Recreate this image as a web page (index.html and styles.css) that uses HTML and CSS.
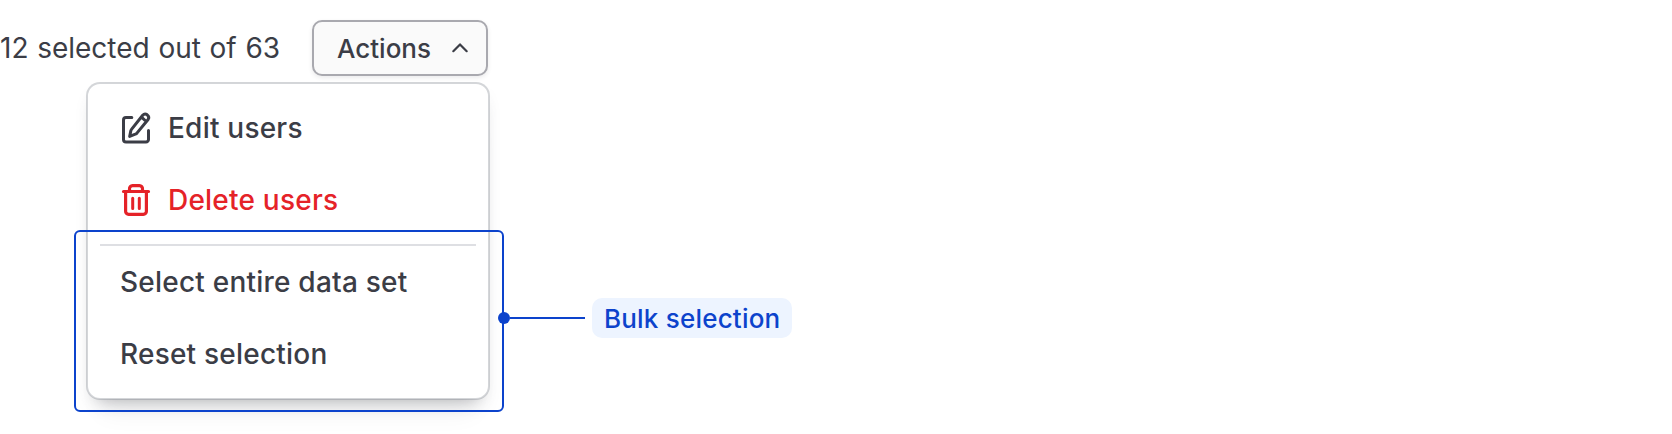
FILE: index.html
```html
<!DOCTYPE html>
<html lang="en">
<head>
<meta charset="utf-8">
<title>Bulk actions</title>
<link rel="stylesheet" href="styles.css">
</head>
<body>
<main class="page">
  <header class="toolbar">
    <span class="count">12 selected out of 63</span>
    <button class="actions" type="button"><span class="actions-label">Actions</span>
      <svg class="chevron" width="18" height="12" viewBox="0 0 18 12" fill="none" stroke="currentColor" stroke-width="2.2" stroke-linecap="round" stroke-linejoin="round"><path d="M2.3 9.2 9 2.400l6.700 6.800"/></svg>
    </button>
  </header>
  <div class="menu" role="menu">
    <div class="item" role="menuitem">
      <svg class="icon" width="32" height="36" viewBox="0 0 32 36" fill="none" stroke="currentColor" stroke-width="3" stroke-linecap="round" stroke-linejoin="round"><path d="M11.800 7.500H6A2.500 2.500 0 0 0 3.500 10V29.500A2.500 2.500 0 0 0 6 32H26A2.500 2.500 0 0 0 28.500 29.500V20.500"/><path d="M9.700 26.400 10.800 20.900Q11 20 11.700 19.100L22.700 5.200Q24.700 3 27.200 4.800 29.800 6.900 28.100 9.500L17.100 22.900Q16.400 23.700 15.300 24.200ZM21.500 7.200 26.200 11.500"/></svg>
      <span class="item-label">Edit users</span>
    </div>
    <div class="item danger" role="menuitem">
      <svg class="icon" width="32" height="36" viewBox="0 0 32 36" fill="none" stroke="currentColor" stroke-width="3.200" stroke-linecap="round" stroke-linejoin="round"><path d="M3.500 9.500H28.500M9.500 9V7A3 3 0 0 1 12.500 3.700H19.500A3 3 0 0 1 22.500 7V9M5.600 10V29.200A3 3 0 0 0 8.600 32.300H23.400A3 3 0 0 0 26.400 29.200V10"/><path stroke-width="3" d="M12.700 16.200V26.500M19.300 16.200V26.500"/></svg>
      <span class="item-label">Delete users</span>
    </div>
    <div class="divider"></div>
    <div class="bulk">
      <div class="item" role="menuitem"><span class="item-label">Select entire data set</span></div>
      <div class="item" role="menuitem"><span class="item-label">Reset selection</span></div>
      <div class="highlight"></div>
      <div class="callout"><span class="dot"></span><span class="line"></span><span class="tag"><span class="tag-label">Bulk selection</span></span></div>
    </div>
  </div>
</main>
</body>
</html>
```
FILE: styles.css
```css
* { box-sizing: border-box; }

body {
  margin: 0;
  background: #fff;
  color: #3b3d46;
  font: 400 28px/36px Inter, sans-serif;
}

.page {
  height: 434px;
  padding-top: 20px;
  overflow: hidden;
}

.toolbar {
  display: flex;
  align-items: center;
  width: 488px;
  height: 56px;
  justify-content: space-between;
}

.count {
  font-size: 28px;
  word-spacing: 0.8px;
  white-space: nowrap;
}

.actions {
  display: flex;
  align-items: center;
  justify-content: space-between;
  width: 176px;
  height: 56px;
  padding: 0 17px 0 23px;
  border: 2px solid #a9a9af;
  border-radius: 10px;
  background: #fafafa;
  box-shadow: 0 2px 4px rgba(59, 61, 70, 0.1);
  color: inherit;
  font: inherit;
  font-size: 26px;
  font-weight: 480;
}

.actions-label { padding-top: 1px; }

.menu {
  width: 404px;
  height: 318px;
  margin: 6px 0 0 86px;
  padding: 8px 0;
  border: 2px solid rgba(101, 106, 118, 0.28);
  border-radius: 14px;
  background: #fff;
  background-clip: padding-box;
  box-shadow: 0 28px 24px -16px rgba(5, 5, 6, 0.06), 0 10px 18px -10px rgba(59, 61, 70, 0.38);
  font-size: 28px;
  font-weight: 480;
  letter-spacing: 0.22px;
}

.item {
  display: flex;
  align-items: center;
  gap: 16px;
  height: 72px;
  padding-left: 32px;
  white-space: nowrap;
}

.danger { color: #e52228; }

.divider {
  height: 2px;
  margin: 8px 12px 0;
  background: #dedfe3;
}

.bulk { position: relative; }

/* Annotation outline and its callout, drawn over the menu */
.highlight {
  position: absolute;
  top: -16px;
  left: -14px;
  width: 430px;
  height: 182px;
  border: 2px solid #0c43cc;
  border-radius: 6px;
}

.callout {
  position: absolute;
  top: 52px;
  left: 410px;
  display: flex;
  align-items: center;
  color: #0c43cc;
}

.dot {
  width: 12px;
  height: 12px;
  border-radius: 50%;
  background: currentColor;
}

.line {
  width: 75px;
  height: 2px;
  background: currentColor;
}

.tag {
  height: 40px;
  margin-left: 7px;
  width: 200px;
  padding-left: 12px;
  border-radius: 10px;
  background: #edf4ff;
  font-size: 26px;
  line-height: 42px;
  letter-spacing: 0.2px;
  white-space: nowrap;
}
```
